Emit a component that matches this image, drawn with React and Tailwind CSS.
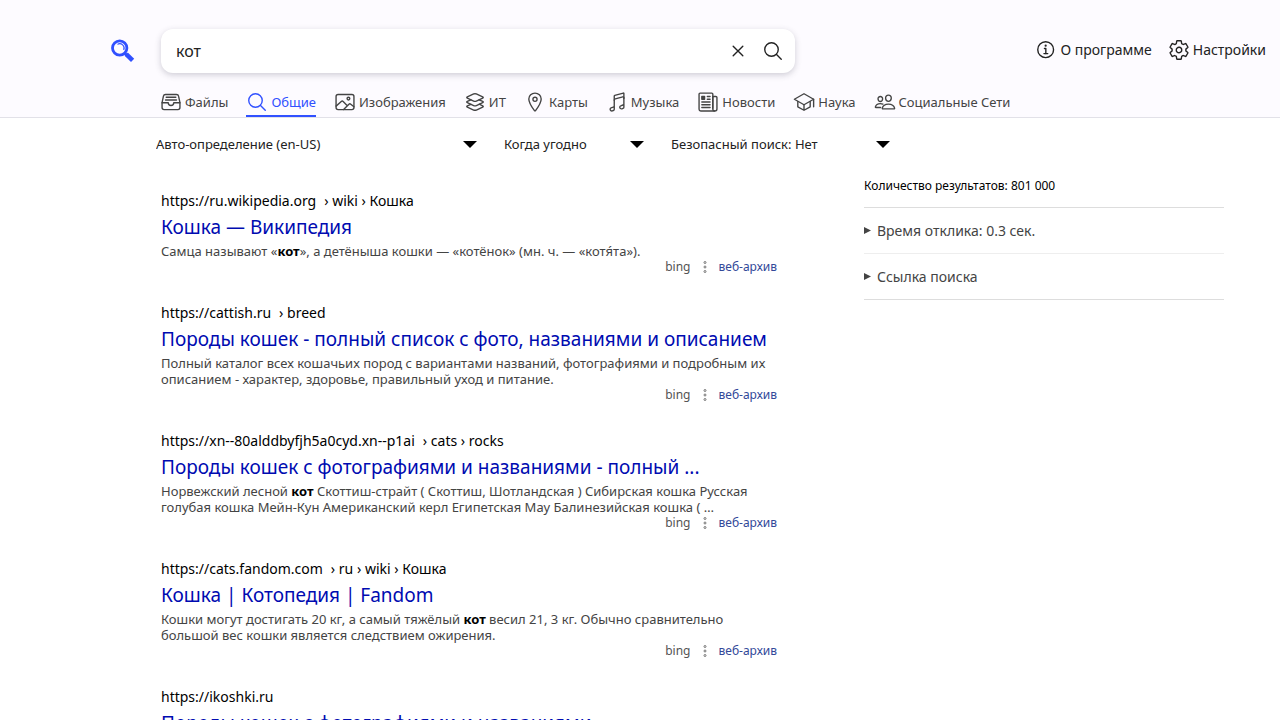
import React from "react";
import {
  IoFileTrayFullOutline,
  IoSearchOutline,
  IoImageOutline,
  IoLayersOutline,
  IoLocationOutline,
  IoMusicalNotesOutline,
  IoNewspaperOutline,
  IoSchoolOutline,
  IoPeopleOutline,
  IoInformationCircleOutline,
  IoSettingsOutline,
  IoCloseOutline,
} from "react-icons/io5";

const tabs = [
  { label: "Файлы", Icon: IoFileTrayFullOutline },
  { label: "Общие", Icon: IoSearchOutline, active: true },
  { label: "Изображения", Icon: IoImageOutline },
  { label: "ИТ", Icon: IoLayersOutline },
  { label: "Карты", Icon: IoLocationOutline },
  { label: "Музыка", Icon: IoMusicalNotesOutline },
  { label: "Новости", Icon: IoNewspaperOutline },
  { label: "Наука", Icon: IoSchoolOutline },
  { label: "Социальные Сети", Icon: IoPeopleOutline },
];

const filters = [
  { id: "language", name: "Язык", width: "w-[321px]", options: ["Авто-определение (en-US)", "Все языки", "Русский"] },
  { id: "time", name: "Период", width: "w-[140px]", options: ["Когда угодно", "За день", "За неделю", "За месяц", "За год"] },
  { id: "safe", name: "Безопасный поиск", width: "w-[219px]", options: ["Безопасный поиск: Нет", "Безопасный поиск: Умеренный", "Безопасный поиск: Строгий"] },
];

const results = [
  {
    host: "https://ru.wikipedia.org",
    path: "› wiki › Кошка",
    title: "Кошка — Википедия",
    content: (
      <>
        Самца называют «<b className="text-black">кот</b>», а детёныша кошки — «котёнок» (мн. ч. — «котя́та»).
      </>
    ),
  },
  {
    host: "https://cattish.ru",
    path: "› breed",
    title: "Породы кошек - полный список с фото, названиями и описанием",
    content:
      "Полный каталог всех кошачьих пород с вариантами названий, фотографиями и подробным их описанием - характер, здоровье, правильный уход и питание.",
  },
  {
    host: "https://xn--80alddbyfjh5a0cyd.xn--p1ai",
    path: "› cats › rocks",
    title: "Породы кошек с фотографиями и названиями - полный ...",
    content: (
      <>
        Норвежский лесной <b className="text-black">кот</b> Скоттиш-страйт ( Скоттиш, Шотландская ) Сибирская кошка Русская
        голубая кошка Мейн-Кун Американский керл Египетская Мау Балинезийская кошка ( …
      </>
    ),
  },
  {
    host: "https://cats.fandom.com",
    path: "› ru › wiki › Кошка",
    title: "Кошка | Котопедия | Fandom",
    content: (
      <>
        Кошки могут достигать 20 кг, а самый тяжёлый <b className="text-black">кот</b> весил 21, 3 кг. Обычно сравнительно
        большой вес кошки является следствием ожирения.
      </>
    ),
  },
  {
    host: "https://ikoshki.ru",
    path: "",
    title: "Породы кошек с фотографиями и названиями",
    content: "",
  },
];

function Logo() {
  return (
    <svg viewBox="0 0 24 24" className="size-6" aria-hidden="true">
      <g fill="none" stroke="#3050ff">
        <circle cx="8.7" cy="9" r="7.2" strokeWidth="2.8" />
        <path d="M6.4 5.4A4.4 4.4 0 0 1 12.7 11" strokeWidth="1.1" />
        <path d="M13.5 14L16.5 17" strokeWidth="3" />
        <path d="M15.2 15.2L21.6 21.4" strokeWidth="4.6" />
      </g>
    </svg>
  );
}

function Header() {
  return (
    <header className="border-b border-[#e2e1e8] bg-[#fdfbff]">
      <div className="flex items-start pt-7 pr-3.5">
        <a href="#home" aria-label="Главная" className="flex h-[46px] w-[161px] shrink-0 items-center pl-[111px]">
          <Logo />
        </a>
        <form
          role="search"
          onSubmit={(e) => e.preventDefault()}
          className="mt-px flex h-11 w-[634px] items-center rounded-xl bg-white shadow-[0_2px_6px_rgba(60,60,80,0.24)]"
        >
          <input
            type="text"
            defaultValue="кот"
            aria-label="Поиск"
            className="h-full min-w-0 flex-1 rounded-xl bg-transparent px-[15px] text-base text-[#222] outline-none"
          />
          <button type="reset" aria-label="Очистить" className="flex h-full w-[35px] items-center justify-center text-[#222]">
            <IoCloseOutline className="size-[22px]" />
          </button>
          <button type="submit" aria-label="Искать" className="mr-1 flex h-full w-9 items-center justify-center text-[#222]">
            <IoSearchOutline className="size-[22px]" />
          </button>
        </form>
        <nav className="mt-[11px] ml-auto flex gap-4 text-sm leading-[22px] text-[#222]">
          <a href="#about" className="flex items-center gap-[3px]">
            <IoInformationCircleOutline className="size-[22px]" />
            О программе
          </a>
          <a href="#preferences" className="flex items-center gap-[3px]">
            <IoSettingsOutline className="size-[22px]" />
            Настройки
          </a>
        </nav>
      </div>
      <nav className="mt-4 flex gap-[18px] pl-[160px] text-[13px]" aria-label="Категории">
        {tabs.map(({ label, Icon, active }) => (
          <button
            key={label}
            type="button"
            className={
              active
                ? "flex h-[27px] items-center gap-[3px] border-b-2 border-[#3050ff] text-[#3050ff]"
                : "flex h-[27px] items-center gap-[3px] border-b-2 border-transparent text-[#444]"
            }
          >
            <Icon className="mb-0.5 size-[22px] shrink-0" />
            {label}
          </button>
        ))}
      </nav>
    </header>
  );
}

function Filters() {
  return (
    <div className="flex gap-[27px] pt-[17px] pl-[156px]">
      {filters.map(({ id, name, width, options }) => (
        <div key={id} className={`grid items-center ${width}`}>
          <select
            id={id}
            aria-label={name}
            className="col-start-1 row-start-1 h-5 w-full appearance-none bg-transparent text-[13px] text-[#222] outline-none"
          >
            {options.map((o) => (
              <option key={o}>{o}</option>
            ))}
          </select>
          <svg
            viewBox="0 0 14 7"
            className="pointer-events-none col-start-1 row-start-1 mb-0.5 h-[7px] w-3.5 justify-self-end"
            aria-hidden="true"
          >
            <path d="M0 0H14L7 7Z" fill="#000" />
          </svg>
        </div>
      ))}
    </div>
  );
}

function Result({ host, path, title, content }) {
  return (
    <article className="mb-7">
      <a href="#result" className="flex gap-2 text-sm leading-5 text-black">
        <span>{host}</span>
        <span>{path}</span>
      </a>
      <h3 className="text-[19px] leading-8 text-[#000bb1]">
        <a href="#result">{title}</a>
      </h3>
      <p className="text-[13px] leading-4 text-[#444]">{content}</p>
      <div className="flex items-center justify-end text-xs leading-4 text-[#545454]">
        <span>bing</span>
        <svg viewBox="0 0 4 12" className="mx-3 h-3 w-1" fill="none" stroke="#666" strokeWidth="0.9" aria-hidden="true">
          <circle cx="2" cy="1.5" r="1" />
          <circle cx="2" cy="6" r="1" />
          <circle cx="2" cy="10.5" r="1" />
        </svg>
        <a href="#archive" className="text-[#334999]">
          веб-архив
        </a>
      </div>
    </article>
  );
}

function Disclosure({ title, className, children }) {
  return (
    <details className={`group border-b py-3 text-sm text-[#444] ${className}`}>
      <summary className="flex cursor-pointer list-none items-center gap-1.5 leading-[21px]">
        <svg viewBox="0 0 7 7" className="size-[7px] group-open:rotate-90" aria-hidden="true">
          <path d="M0 0L7 3.5L0 7Z" fill="currentColor" />
        </svg>
        {title}
      </summary>
      <p className="pt-2">{children}</p>
    </details>
  );
}

function Sidebar() {
  return (
    <aside className="w-[360px] shrink-0 pt-[22px]">
      <p className="border-b border-[#ddd] pb-3 text-xs leading-[18px] text-black">Количество результатов: 801 000</p>
      <Disclosure title="Время отклика: 0.3 сек." className="border-[#eee]">
        bing: 0.3
      </Disclosure>
      <Disclosure title="Ссылка поиска" className="border-[#ddd]">
        q=кот
      </Disclosure>
    </aside>
  );
}

export default function App() {
  return (
    <div className="h-screen overflow-y-auto bg-white font-['Noto_Sans',sans-serif] [scrollbar-width:none]">
      <Header />
      <Filters />
      <div className="flex gap-[87px] pl-[161px]">
        <main className="w-[616px] pt-9">
          {results.map((r) => (
            <Result key={r.host} {...r} />
          ))}
        </main>
        <Sidebar />
      </div>
    </div>
  );
}
